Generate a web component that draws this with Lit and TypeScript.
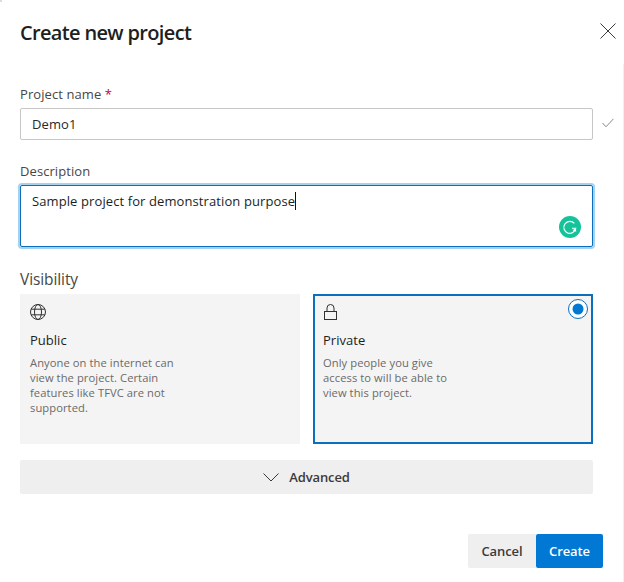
import { LitElement, html, css } from "lit";
import { customElement } from "lit/decorators.js";

@customElement("app-root")
export class AppRoot extends LitElement {
  static styles = css`
    :host {
      display: block;
      width: 624px;
      height: 582px;
      background:
        linear-gradient(#dcdcdc, #dcdcdc) 0 0 / 2px 2px no-repeat,
        linear-gradient(#f0f0f0, #f0f0f0) 623px 64px / 1px 518px no-repeat,
        #fff;
      font-family: "Open Sans", "Noto Sans", sans-serif;
      color: #292827;
      overflow: hidden;
    }
    .dialog {
      height: 582px;
      box-sizing: border-box;
      padding: 18px 31px 0 20px;
      display: flex;
      flex-direction: column;
    }
    .head {
      display: flex;
      justify-content: space-between;
      align-items: flex-start;
      height: 30px;
      margin-right: -23px;
    }
    h1 {
      margin: 0;
      font-size: 20px;
      font-weight: 600;
      line-height: 30px;
      letter-spacing: -0.66px;
      color: #201f1e;
    }
    .close { display: block; margin-top: 5px; }
    .label {
      font-size: 13px;
      line-height: 18px;
      letter-spacing: 0.08px;
      color: #484644;
    }
    .req { color: #c00040; }
    .name-label { margin-top: 37px; }
    .name-row {
      margin-top: 5px;
      position: relative;
      height: 32px;
      box-sizing: border-box;
      border: 1px solid #c8c6c4;
      border-radius: 2px;
      padding: 0 11px;
      display: flex;
      align-items: center;
      font-size: 13px;
      letter-spacing: 0.08px;
    }
    .check { position: absolute; right: -22px; top: 9px; }
    .desc-label { margin-top: 22px; }
    .desc {
      margin-top: 5px;
      position: relative;
      height: 62px;
      box-sizing: border-box;
      border: 1px solid #0b6fbe;
      border-radius: 2px;
      box-shadow: 0 0 0 2px #a6d2f2;
      padding: 6px 11px;
      font-size: 13px;
      line-height: 18px;
      letter-spacing: 0.1px;
      color: #201f1e;
    }
    .caret {
      display: inline-block;
      width: 1px;
      height: 18px;
      background: #111;
      vertical-align: top;
    }
    .grammarly { position: absolute; right: 11px; bottom: 8px; }
    .vis-label {
      margin-top: 21px;
      font-size: 15.5px;
      line-height: 22px;
      letter-spacing: -0.1px;
      color: #484644;
    }
    .cards {
      margin-top: 4px;
      display: grid;
      grid-template-columns: 280px 280px;
      column-gap: 13px;
      height: 150px;
    }
    .card {
      position: relative;
      box-sizing: border-box;
      background: #f4f4f4;
      padding: 10px;
    }
    .card.sel {
      border: 2px solid #0b6fbe;
      padding: 8px;
    }
    .card svg.ic { display: block; }
    .card .t {
      margin-top: 11px;
      font-size: 13px;
      line-height: 18px;
      letter-spacing: 0.02px;
      color: #201f1e;
    }
    .card .d {
      margin-top: 6px;
      width: 145px;
      font-size: 11.2px;
      line-height: 15px;
      letter-spacing: 0.07px;
      color: #6b6a69;
    }
    .radio { position: absolute; right: 3px; top: 3px; display: block; }
    .adv {
      margin-top: 16px;
      height: 34px;
      background: #efefef;
      border-radius: 2px;
      display: flex;
      align-items: center;
      justify-content: center;
      gap: 10px;
      font-size: 13px;
      font-weight: 600;
      letter-spacing: -0.1px;
      color: #3b3a39;
    }
    .foot {
      margin-top: 40px;
      margin-right: -10px;
      display: flex;
      justify-content: flex-end;
    }
    .btn {
      height: 34px;
      display: flex;
      align-items: center;
      justify-content: center;
      font-size: 13px;
      font-weight: 600;
      letter-spacing: -0.1px;
      border-radius: 2px;
    }
    .cancel { width: 68px; background: #efefef; color: #3b3a39; border-radius: 2px 0 0 2px; }
    .create { width: 67px; background: #0078d4; color: #fff; }
  `;

  render() {
    return html`
      <div class="dialog">
        <div class="head">
          <h1>Create new project</h1>
          <svg class="close" width="16" height="16" viewBox="0 0 16 16" fill="none" stroke="#3b3a39" stroke-width="1">
            <path d="M0.5 0.5 15.5 15.5M15.5 0.5 0.5 15.5"></path>
          </svg>
        </div>
        <div class="label name-label">Project name <span class="req">*</span></div>
        <div class="name-row">
          Demo1
          <svg class="check" width="12" height="10" viewBox="0 0 12 10" fill="none" stroke="#8a8886" stroke-width="1">
            <path d="M0.5 5 4 8.8 11.5 0.8"></path>
          </svg>
        </div>
        <div class="label desc-label">Description</div>
        <div class="desc">
          Sample project for demonstration purpose<span class="caret"></span>
          <svg class="grammarly" width="22" height="22" viewBox="0 0 22 22" fill="none">
            <circle cx="11" cy="11" r="11" fill="#15c39a"></circle>
            <path d="M15.4 7.4A6 6 0 1 0 16.8 12.2H13" stroke="#fff" stroke-width="1.1"></path>
            <path d="M13.6 14.2 16.9 12 17.2 15.8Z" fill="#fff"></path>
          </svg>
        </div>
        <div class="vis-label">Visibility</div>
        <div class="cards">
          <div class="card">
            <svg class="ic" width="16" height="16" viewBox="0 0 16 16" fill="none" stroke="#323130" stroke-width="1">
              <circle cx="8" cy="8" r="7.5"></circle>
              <ellipse cx="8" cy="8" rx="3.5" ry="7.5"></ellipse>
              <path d="M1.2 5.2H14.8M1.2 10.8H14.8"></path>
            </svg>
            <div class="t">Public</div>
            <div class="d">Anyone on the internet can view the project. Certain features like TFVC are not supported.</div>
          </div>
          <div class="card sel">
            <svg class="ic" width="15" height="16" viewBox="0 0 15 16" fill="none" stroke="#323130" stroke-width="1">
              <rect x="1.5" y="7.5" width="12" height="8"></rect>
              <path d="M4 7.5V4a3.5 3.5 0 0 1 7 0V7.5"></path>
            </svg>
            <div class="t">Private</div>
            <div class="d">Only people you give access to will be able to view this project.</div>
            <svg class="radio" width="20" height="20" viewBox="0 0 20 20" fill="none">
              <circle cx="10" cy="10" r="9.5" stroke="#0b6fbe" fill="#fff"></circle>
              <circle cx="10" cy="10" r="5.5" fill="#0078d4"></circle>
            </svg>
          </div>
        </div>
        <div class="adv">
          <svg width="16" height="9" viewBox="0 0 16 9" fill="none" stroke="#3b3a39" stroke-width="1">
            <path d="M0.5 0.5 8 8 15.5 0.5"></path>
          </svg>
          Advanced
        </div>
        <div class="foot">
          <div class="btn cancel">Cancel</div>
          <div class="btn create">Create</div>
        </div>
      </div>
    `;
  }
}
